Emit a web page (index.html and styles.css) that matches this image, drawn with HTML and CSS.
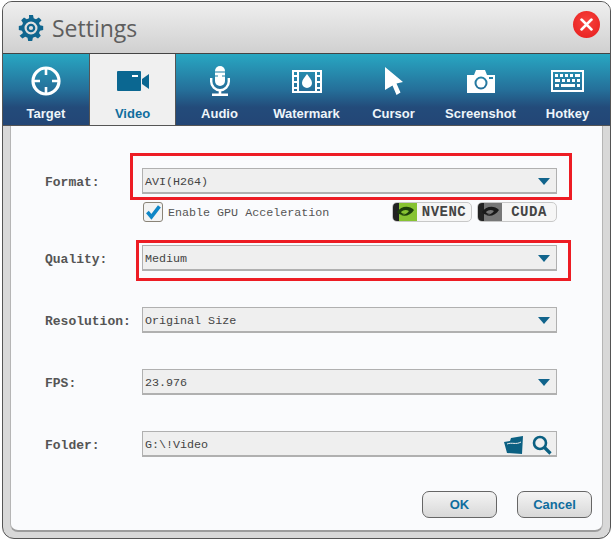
FILE: index.html
```html
<!DOCTYPE html>
<html lang="en">
<head>
<meta charset="utf-8">
<title>Settings</title>
<link rel="stylesheet" href="styles.css">
</head>
<body>
<div class="window">
  <header class="titlebar">
    <svg class="gear" viewBox="0 0 26 26" width="26" height="26"><path fill="#0f668f" fill-rule="evenodd" d="M11 0h4l.7 3.2 2.3 1 2.800-1.800 2.800 2.800L21 8l1 2.300 3.200.7v4l-3.200.7-1 2.300 1.800 2.800-2.800 2.800-2.800-1.800-2.300 1-.7 3.200h-4l-.7-3.200-2.300-1-2.800 1.800-2.800-2.800L5 18l-1-2.300-3.200-.7v-4l3.200-.7L5 8 3.200 5.200 6 2.400 8.800 4.200l2.300-1zM13 6.500a6.500 6.500 0 1 0 0 13 6.500 6.500 0 0 0 0-13z"/><circle cx="13" cy="13" r="3.200" fill="none" stroke="#0f668f" stroke-width="2.200"/></svg>
    <h1 class="title">Settings</h1>
    <button class="close" aria-label="Close"><svg viewBox="0 0 12 12" width="13" height="13"><path d="M1.500 1.500l9 9M10.500 1.500l-9 9" stroke="#fff" stroke-width="2.600" stroke-linecap="round"/></svg></button>
  </header>
  <nav class="tabs">
    <div class="tab tab-first">
      <div class="icon"><svg viewBox="0 0 30 30" width="30" height="30"><circle cx="15" cy="15" r="13" fill="none" stroke="#fff" stroke-width="3.200"/><path d="M15 1v8M15 21v8M1 15h8M21 15h8" stroke="#fff" stroke-width="2.600"/></svg></div>
      <span>Target</span>
    </div>
    <div class="tab tab-active">
      <div class="icon"><svg viewBox="0 0 32 20" width="32" height="20"><path fill="#0b6791" d="M1 0h22a1 1 0 0 1 1 1v18a1 1 0 0 1-1 1H1a1 1 0 0 1-1-1V1a1 1 0 0 1 1-1z"/><path fill="#0b6791" d="M25 8l7-5v15l-7-5z"/><path fill="#fff" d="M15 4h6v2h-6z"/></svg></div>
      <span>Video</span>
    </div>
    <div class="tab">
      <div class="icon"><svg viewBox="0 0 20 30" width="20" height="30"><path fill="#fff" d="M5 5a5 5 0 0 1 10 0v10a5 5 0 0 1-10 0z"/><path d="M5 6h10M5 10h3M12 10h3" stroke="#1f7ea3" stroke-width="1.200"/><path fill="none" stroke="#fff" stroke-width="2.400" d="M1.200 12v3.500a8.800 8.800 0 0 0 17.600 0V12"/><path stroke="#fff" stroke-width="2.600" d="M10 24v4.500M2 28.700h16"/></svg></div>
      <span>Audio</span>
    </div>
    <div class="tab">
      <div class="icon"><svg viewBox="0 0 30 23" width="30" height="23"><path fill="#fff" fill-rule="evenodd" d="M0 0h30v23H0zM2 2v3h3V2zM2 7v4h3V7zM2 13v4h3v-4zM2 19v2h3v-2zM25 2v3h3V2zM25 7v4h3V7zM25 13v4h3v-4zM25 19v2h3v-2zM7 2v19h16V2z"/><path fill="#fff" d="M15 4c2.500 3.500 5 6 5 9a5 5 0 0 1-10 0c0-3 2.500-5.500 5-9z"/></svg></div>
      <span>Watermark</span>
    </div>
    <div class="tab">
      <div class="icon"><svg viewBox="0 0 18 28" width="18" height="28"><path fill="#fff" d="M0 0l18 15-6.500 1.500 4 9-4 2.500-4-9.500L0 23z"/></svg></div>
      <span>Cursor</span>
    </div>
    <div class="tab">
      <div class="icon"><svg viewBox="0 0 28 23" width="28" height="23"><path fill="#fff" fill-rule="evenodd" d="M0 5h7l2-5h9l2 5h8v18H0zM14 6.500a6.500 6.500 0 1 0 0 13 6.500 6.500 0 0 0 0-13zM22 7v2h4V7z"/><circle cx="14" cy="13" r="4.500" fill="#fff"/></svg></div>
      <span>Screenshot</span>
    </div>
    <div class="tab">
      <div class="icon"><svg viewBox="0 0 33 22" width="33" height="22"><path fill="#fff" fill-rule="evenodd" d="M0 0h33v22H0zM2 2v18h29V2zM4 4v3h3V4zM9 4v3h3V4zM14 4v3h3V4zM19 4v3h3V4zM24 4v3h5V4zM4 9v3h5V9zM11 9v3h3V9zM16 9v3h3V9zM21 9v3h3V9zM26 9v3h3V9zM4 14v3h4v-3zM10 14v3h14v-3zM26 14v3h3v-3z"/></svg></div>
      <span>Hotkey</span>
    </div>
  </nav>
  <main class="panel">
    <div class="row row-format">
      <label class="label">Format:</label>
      <div class="field"><span>AVI(H264)</span><i class="arrow"></i></div>
      <div class="mark mark-format"></div>
    </div>
    <div class="gpu">
      <span class="check"><svg viewBox="0 0 20 20" width="16" height="16"><path d="M3 10l5 6L18 3" fill="none" stroke="#0f86c6" stroke-width="4.500"/></svg></span>
      <span class="gpu-text">Enable GPU Acceleration</span>
      <div class="badge badge-first">
        <span class="logo logo-green"><svg viewBox="0 0 24 20" width="24" height="20"><path fill="#1d3f0c" fill-rule="evenodd" d="M4 10c4-6 12-7 17-2-3 5-9 7-13 5 2 0 6-1 8-4-3-2-6-1-8 1 1 2 3 2 4 1-2 3-6 2-8-1z"/></svg></span>
        <span class="badge-text">NVENC</span>
      </div>
      <div class="badge">
        <span class="logo logo-grey"><svg viewBox="0 0 24 20" width="24" height="20"><path fill="#1a1a1a" fill-rule="evenodd" d="M4 10c4-6 12-7 17-2-3 5-9 7-13 5 2 0 6-1 8-4-3-2-6-1-8 1 1 2 3 2 4 1-2 3-6 2-8-1z"/></svg></span>
        <span class="badge-text">CUDA</span>
      </div>
    </div>
    <div class="row row-quality">
      <label class="label">Quality:</label>
      <div class="field"><span>Medium</span><i class="arrow"></i></div>
      <div class="mark mark-quality"></div>
    </div>
    <div class="row row-next">
      <label class="label">Resolution:</label>
      <div class="field"><span>Original Size</span><i class="arrow"></i></div>
    </div>
    <div class="row row-next">
      <label class="label">FPS:</label>
      <div class="field"><span>23.976</span><i class="arrow"></i></div>
    </div>
    <div class="row row-next">
      <label class="label">Folder:</label>
      <div class="field field-folder">
        <span>G:\!Video</span>
        <svg class="folder-icon" viewBox="0 0 20 18" width="20" height="18"><path fill="#0b6082" d="M7 2l12-2-1 18-15-1L0 6l6-1z"/><path fill="none" stroke="#eee" stroke-width="1" d="M3 8c5-2 9 1 14-2"/></svg>
        <svg class="search-icon" viewBox="0 0 20 20" width="20" height="20"><circle cx="8" cy="8" r="6" fill="none" stroke="#0b6082" stroke-width="2.600"/><path d="M12.500 12.500l6 6" stroke="#0b6082" stroke-width="3.200"/></svg>
      </div>
    </div>
    <div class="actions">
      <button class="btn">OK</button>
      <button class="btn">Cancel</button>
    </div>
  </main>
</div>
</body>
</html>
```

FILE: styles.css
```css
* { box-sizing: border-box; }
html, body { margin: 0; padding: 0; background: #fff; }
body { width: 612px; height: 540px; overflow: hidden; font-family: "Liberation Sans", Arial, sans-serif; }

.window {
  width: 609px;
  height: 538px;
  margin: 1px 0 0 2px;
  border: 1px solid #555;
  border-radius: 10px 10px 12px 12px;
  background: #d8d8d8;
  overflow: hidden;
  display: flex;
  flex-direction: column;
}

.titlebar {
  height: 52px;
  flex: none;
  display: flex;
  align-items: center;
  padding: 0 10px 0 15px;
  background: linear-gradient(#efefef, #d0d0d0);
  border-bottom: 1px solid #444;
}
.gear { flex: none; }
.title { margin: 0 0 0 8px; font-size: 23px; font-weight: 400; color: #5e5e5e; font-family: "Open Sans", "Liberation Sans", sans-serif; flex: 1; }
.close {
  width: 27px; height: 27px; padding: 0; border: 0; border-radius: 50%;
  margin-bottom: 6px;
  background: radial-gradient(circle at 50% 40%, #f7443f, #e61b1b);
  display: flex; align-items: center; justify-content: center;
}

.tabs {
  height: 72px;
  flex: none;
  display: flex;
  background: linear-gradient(#28a7c2 0, #25709a 50%, #234b7a 75%, #234676 100%);
  border-bottom: 1px solid #555;
}
.tab {
  width: 87px;
  flex: none;
  display: flex;
  flex-direction: column;
  align-items: center;
  color: #eef5fa;
  font-size: 13px;
  font-weight: 700;
}
.icon { height: 38px; margin-top: 8px; flex: none; display: flex; align-items: center; justify-content: center; }
.icon svg { display: block; }
.tab span { margin-top: 6px; line-height: 16px; }
.tab-first { width: 86px; }
.tab-active {
  background: #f0f0f0;
  color: #0f6d9e;
  border-left: 1px solid #555;
  border-right: 1px solid #555;
}

.panel {
  flex: 1;
  margin: 0 7px 6px;
  padding-top: 42px;
  background: #fafbfd;
  border-left: 1px solid #b5b5b5;
  border-right: 1px solid #b5b5b5;
  border-bottom: 2px solid #9c9c9c;
  border-radius: 0 0 8px 8px;
}

.row { position: relative; display: flex; align-items: center; height: 26px; padding-left: 33px; }
.row-quality { margin-top: 23px; }
.row-next { margin-top: 36px; }
.label { width: 98px; flex: none; padding: 2px 0 0 1px; font: 700 13px "Liberation Mono", monospace; color: #555; }
.field {
  width: 415px;
  height: 26px;
  flex: none;
  display: flex;
  align-items: center;
  padding: 2px 6px 0 2px;
  background: #efefef;
  border: 1px solid #b0b0b0;
  border-bottom-width: 2px;
  font: 11.700px "Liberation Mono", monospace;
  color: #444;
}
.field span { flex: 1; }
.field-folder { padding-right: 4px; }
.arrow { width: 0; height: 0; border: 6px solid transparent; border-top: 7px solid #11648c; border-bottom: 0; }
.folder-icon { flex: none; margin-right: 8px; }
.search-icon { flex: none; }

.mark { position: absolute; border: 3px solid #ed1c24; pointer-events: none; }
.mark-format { left: 119px; top: -15px; width: 442px; height: 47px; }
.mark-quality { left: 125px; top: -5px; width: 435px; height: 41px; }

.gpu { display: flex; align-items: center; height: 20px; margin: 8px 0 0 132px; width: 414px; }
.check {
  width: 20px; height: 20px; flex: none;
  display: flex; align-items: center; justify-content: center;
  border: 1px solid #8a8478; border-radius: 3px; background: #f3f3f3;
}
.gpu-text { margin-left: 5px; padding-top: 2px; font: 11.700px "Liberation Mono", monospace; color: #555; flex: 1; }
.badge {
  display: flex; align-items: center;
  width: 80px; height: 20px;
  border: 1px solid #c8c8c8; border-radius: 5px; background: #f6f6f6;
  overflow: hidden;
  margin-left: 5px;
}
.logo { width: 24px; height: 20px; flex: none; display: flex; align-items: center; justify-content: center; }
.logo-green { background: linear-gradient(90deg, #222, #222 25%, #87c332 25%); }
.logo-grey { background: linear-gradient(90deg, #222, #222 25%, #777 25%); }
.badge-text { flex: 1; text-align: center; font: 700 14px "Liberation Mono", monospace; letter-spacing: .5px; color: #444; }

.actions { display: flex; justify-content: flex-end; gap: 20px; margin-top: 34px; padding-right: 10px; }
.btn {
  width: 75px; height: 27px; padding: 0;
  border: 1px solid #666; border-radius: 7px;
  background: linear-gradient(#f4f4f4, #d8d8d8);
  color: #0f6d9e; font: 700 13px "Liberation Sans", sans-serif;
}
```
